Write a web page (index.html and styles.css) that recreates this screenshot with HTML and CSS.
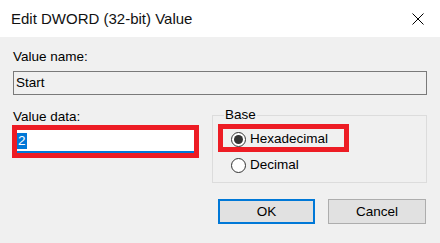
FILE: index.html
```html
<html>
<head>
<title>Edit DWORD (32-bit) Value</title>
<link rel="stylesheet" href="styles.css">
</head>
<body>
<div class="window">
  <div class="titlebar">
    <span class="title">Edit DWORD (32-bit) Value</span>
    <span class="close">
      <svg width="12" height="12" viewBox="0 0 12 12"><path d="M0.5 0.5 L11.5 11.5 M11.5 0.5 L0.5 11.5" stroke="#000" stroke-width="1" fill="none"/></svg>
    </span>
  </div>
  <div class="content">
    <div class="label">Value name:</div>
    <div class="namebox">Start</div>
    <div class="row">
      <div class="datacol">
        <div class="label">Value data:</div>
        <div class="mark">
          <div class="databox"><span class="sel">2</span></div>
        </div>
      </div>
      <div class="group">
        <div class="group-title">Base</div>
        <div class="mark hexmark">
          <div class="radio"><span class="dot on"></span>Hexadecimal</div>
        </div>
        <div class="radio decimal"><span class="dot"></span>Decimal</div>
      </div>
    </div>
    <div class="buttons">
      <div class="btn default">OK</div>
      <div class="btn">Cancel</div>
    </div>
  </div>
</div>
</body>
</html>
```

FILE: styles.css
```css
body { margin:0; background:#f0f0f0; font-family:"Liberation Sans", Arial, sans-serif; color:#000; }
.window { width:440px; height:243px; overflow:hidden; background:#f0f0f0; }

.titlebar { height:37px; background:#fff; display:flex; align-items:center; justify-content:space-between; padding-left:11px; }
.title { font-size:15px; color:#111; }
.close { width:44px; height:37px; display:flex; align-items:center; justify-content:center; }

.content { padding:12px 13px 0 13px; font-size:13.5px; }
.label { line-height:16px; }
.namebox { margin-top:6px; height:22px; line-height:22px; border:1px solid #7a7a7a; padding-left:2px; background:#f0f0f0; }

.row { display:flex; gap:13px; margin-top:12px; }
.datacol { width:186px; padding-top:2px; }
.mark { border:5px solid #ed1c24; }
.datacol .mark { margin-left:-1px; }
.databox { height:21px; background:#fff; border-bottom:2px solid #0078d7; display:flex; align-items:center; }
.sel { background:#0078d7; color:#fff; line-height:16px; padding:0 1px; }

.group { flex:1; margin-top:8px; border:1px solid #dcdcdc; padding:0 0 9px 5px; }
.group-title { margin:-9px 0 0 6px; line-height:16px; background:#f0f0f0; padding:0 1px; width:fit-content; }
.hexmark { margin-top:1px; width:121px; padding:2px 0 0 0; }
.radio { display:flex; align-items:center; gap:4px; line-height:16px; padding-left:8px; }
.decimal { margin-top:5px; padding-left:18px; margin-left:-5px; }
.dot { width:13px; height:13px; border:1px solid #333; border-radius:50%; background:#fff; display:flex; align-items:center; justify-content:center; }
.dot.on::after { content:""; width:9px; height:9px; border-radius:50%; background:#333; }

.buttons { display:flex; justify-content:flex-end; gap:13px; margin-top:16px; margin-right:1px; }
.btn { width:96px; height:23px; line-height:23px; text-align:center; background:#e1e1e1; border:1px solid #adadad; }
.btn.default { width:93px; height:21px; line-height:21px; border:2px solid #0078d7; }
```
